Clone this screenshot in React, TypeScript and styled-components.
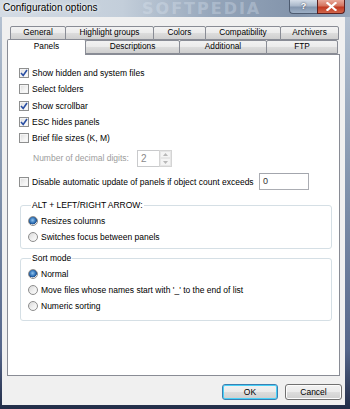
import React from 'react';
import styled, { createGlobalStyle } from 'styled-components';

const GlobalStyle = createGlobalStyle`
  html, body {
    margin: 0;
    padding: 0;
    background: #ffffff;
  }
  body {
    font-family: "Liberation Sans", Arial, sans-serif;
    font-size: 8.5px;
    color: #000;
  }
`;

const topTabs = [
  { label: 'General', width: 56 },
  { label: 'Highlight groups', width: 89 },
  { label: 'Colors', width: 53 },
  { label: 'Compatibility', width: 76 },
  { label: 'Archivers', width: 59 },
];

const bottomTabs = [
  { label: 'Panels', width: 79, active: true },
  { label: 'Descriptions', width: 95 },
  { label: 'Additional', width: 88 },
  { label: 'FTP', width: 72 },
];

const checks = [
  { label: 'Show hidden and system files', checked: true },
  { label: 'Select folders', checked: false },
  { label: 'Show scrollbar', checked: true },
  { label: 'ESC hides panels', checked: true },
  { label: 'Brief file sizes (K, M)', checked: false },
];

const App: React.FC = () => {
  return (
    <>
      <GlobalStyle />
      <Window>
        <TitleBar>
          <TitleText>Configuration options</TitleText>
          <TitleWatermark>SOFTPEDIA</TitleWatermark>
          <CaptionButtons>
            <HelpButton>?</HelpButton>
            <CloseButton>
              <svg width="11" height="9" viewBox="0 0 11 9">
                <path d="M1.5 1 L9.5 8 M9.5 1 L1.5 8" stroke="#fff" strokeWidth="2.2" strokeLinecap="square" />
              </svg>
            </CloseButton>
          </CaptionButtons>
        </TitleBar>

        <Frame>
          <Client>
            <TabStrip>
              <TabRow $indent={3} $height={12}>
                {topTabs.map((t) => (
                  <Tab key={t.label} $width={t.width}>{t.label}</Tab>
                ))}
              </TabRow>
              <TabRow $indent={0} $height={16}>
                {bottomTabs.map((t) => (
                  <Tab key={t.label} $width={t.width} $active={t.active}>{t.label}</Tab>
                ))}
              </TabRow>
            </TabStrip>

            <Panel>
              {checks.map((c) => (
                <CheckRow key={c.label}>
                  <CheckBox checked={c.checked} />
                  <span>{c.label}</span>
                </CheckRow>
              ))}

              <DigitsRow>
                <DisabledLabel>Number of decimal digits:</DisabledLabel>
                <SpinWrap>
                  <SpinInput>2</SpinInput>
                  <SpinButtons>
                    <SpinHalf>
                      <svg width="5" height="3" viewBox="0 0 5 3"><path d="M0 3 L2.5 0 L5 3 Z" fill="#b8b8b8" /></svg>
                    </SpinHalf>
                    <SpinHalf>
                      <svg width="5" height="3" viewBox="0 0 5 3"><path d="M0 0 L2.5 3 L5 0 Z" fill="#b8b8b8" /></svg>
                    </SpinHalf>
                  </SpinButtons>
                </SpinWrap>
              </DigitsRow>

              <CountRow>
                <CheckBox checked={false} />
                <CountLabel>Disable automatic update of panels if object count exceeds</CountLabel>
                <TextBox>0</TextBox>
              </CountRow>

              <GroupBox $top={10} $bottom={3}>
                <Legend>ALT + LEFT/RIGHT ARROW:</Legend>
                <RadioRow>
                  <Radio $selected />
                  <span>Resizes columns</span>
                </RadioRow>
                <RadioRow>
                  <Radio />
                  <span>Switches focus between panels</span>
                </RadioRow>
              </GroupBox>

              <GroupBox $top={4} $bottom={6}>
                <Legend>Sort mode</Legend>
                <RadioRow>
                  <Radio $selected />
                  <span>Normal</span>
                </RadioRow>
                <RadioRow>
                  <Radio />
                  <span>Move files whose names start with '_' to the end of list</span>
                </RadioRow>
                <RadioRow>
                  <Radio />
                  <span>Numeric sorting</span>
                </RadioRow>
              </GroupBox>
            </Panel>

            <ButtonRow>
              <DialogButton $default>OK</DialogButton>
              <DialogButton>Cancel</DialogButton>
            </ButtonRow>
          </Client>
        </Frame>
      </Window>
    </>
  );
};

export default App;

const CheckBox: React.FC<{ checked: boolean }> = ({ checked }) => (
  <CheckBoxBox>
    {checked && (
      <svg width="8" height="8" viewBox="0 0 8 8">
        <path d="M1 4 L3.2 6.5 L7 1" fill="none" stroke="#2a4fa3" strokeWidth="1.6" />
      </svg>
    )}
  </CheckBoxBox>
);

const Window = styled.div`
  width: 350px;
  height: 409px;
  display: flex;
  flex-direction: column;
  overflow: hidden;
  background: #8d9db3;
`;

const TitleBar = styled.div`
  position: relative;
  height: 17px;
  flex: none;
  display: flex;
  align-items: flex-start;
  padding: 0 5px 0 3px;
  background: linear-gradient(to right, #d3dbe4 0%, #c3ceda 35%, #93a4b9 62%, #8394ab 85%, #97a7bb 100%);
`;

const TitleText = styled.div`
  font-size: 10px;
  line-height: 15px;
  color: #000;
  text-shadow: 0 0 5px rgba(255, 255, 255, 0.95), 0 0 2px rgba(255, 255, 255, 0.9);
  white-space: nowrap;
`;

const TitleWatermark = styled.div`
  position: absolute;
  left: 142px;
  top: 0;
  font-family: "DejaVu Sans", sans-serif;
  font-weight: bold;
  font-size: 16px;
  line-height: 17px;
  letter-spacing: 2px;
  color: rgba(230, 238, 248, 0.3);
  pointer-events: none;
`;

const CaptionButtons = styled.div`
  margin-left: auto;
  display: flex;
  position: relative;
  z-index: 1;
`;

const HelpButton = styled.div`
  width: 27px;
  height: 13px;
  border: 1px solid #4d5b70;
  border-top: none;
  border-right: none;
  border-radius: 0 0 0 4px;
  background: linear-gradient(to bottom, #d5dde8 0%, #aab8ca 45%, #8496ae 55%, #9dafc5 100%);
  color: #fff;
  font-weight: bold;
  font-size: 9px;
  line-height: 13px;
  text-align: center;
  text-shadow: 0 0 2px #334;
`;

const CloseButton = styled.div`
  width: 26px;
  height: 13px;
  border: 1px solid #5a1f1f;
  border-top: none;
  border-radius: 0 0 4px 0;
  background: linear-gradient(to bottom, #e9a99a 0%, #d3745f 45%, #c23a22 55%, #d0654a 100%);
  display: flex;
  align-items: center;
  justify-content: center;
`;

const Frame = styled.div`
  flex: 1;
  display: flex;
  padding: 0 5px 4px 2px;
  background: linear-gradient(to bottom, #b4c1d1 0%, #7f91ab 45%, #55668a 85%, #222d48 100%);
`;

const Client = styled.div`
  flex: 1;
  display: flex;
  flex-direction: column;
  background: #f0f0f0;
  padding: 11px 5px 5px 5px;
`;

const TabStrip = styled.div`
  display: flex;
  flex-direction: column;
  height: 26px;
  position: relative;
  z-index: 1;
`;

const TabRow = styled.div<{ $indent: number; $height: number }>`
  display: flex;
  align-items: flex-end;
  padding-left: ${(p) => p.$indent}px;
  height: ${(p) => p.$height}px;
  margin-top: -2px;
  &:first-child {
    margin-top: 0;
  }
`;

const Tab = styled.div<{ $width: number; $active?: boolean }>`
  box-sizing: border-box;
  width: ${(p) => p.$width}px;
  height: ${(p) => (p.$active ? 16 : 14)}px;
  margin-left: -1px;
  &:first-child {
    margin-left: 0;
  }
  border: 1px solid #898c95;
  border-bottom: ${(p) => (p.$active ? 'none' : '1px solid #898c95')};
  border-radius: 2px 2px 0 0;
  background: ${(p) =>
    p.$active
      ? '#ffffff'
      : 'linear-gradient(to bottom, #f2f2f2 0%, #ebebeb 50%, #dddddd 51%, #cfcfcf 100%)'};
  font-size: 8.3px;
  line-height: ${(p) => (p.$active ? 13 : 11)}px;
  text-align: center;
  white-space: nowrap;
  position: relative;
  z-index: ${(p) => (p.$active ? 2 : 0)};
  margin-bottom: ${(p) => (p.$active ? -1 : 0)}px;
`;

const Panel = styled.div`
  box-sizing: border-box;
  height: 322px;
  flex: none;
  background: #ffffff;
  border: 1px solid #898c95;
  padding: 10px 7px 0 11px;
  display: flex;
  flex-direction: column;
`;

const CheckRow = styled.div`
  height: 16.3px;
  display: flex;
  align-items: center;
  gap: 3px;
  white-space: nowrap;
`;

const CheckBoxBox = styled.div`
  box-sizing: border-box;
  width: 10px;
  height: 10px;
  flex: none;
  border: 1px solid #8e8f8f;
  background: linear-gradient(135deg, #dcdcdc 0%, #f4f4f4 60%, #ffffff 100%);
  box-shadow: inset 0 0 0 1px #f4f4f4;
  display: flex;
  align-items: center;
  justify-content: center;
`;

const DigitsRow = styled.div`
  height: 17px;
  margin-top: 3.5px;
  padding-left: 14px;
  display: flex;
  align-items: center;
  gap: 8px;
`;

const DisabledLabel = styled.span`
  color: #9c9c9c;
  white-space: nowrap;
`;

const SpinWrap = styled.div`
  display: flex;
  height: 17px;
`;

const SpinInput = styled.div`
  box-sizing: border-box;
  width: 22px;
  height: 17px;
  border: 1px solid #c9cacc;
  border-right: none;
  color: #8a8a8a;
  font-size: 10px;
  line-height: 15px;
  padding-left: 3px;
`;

const SpinButtons = styled.div`
  display: flex;
  flex-direction: column;
  width: 13px;
  height: 17px;
  border: 1px solid #d4d4d4;
  box-sizing: border-box;
`;

const SpinHalf = styled.div`
  flex: 1;
  display: flex;
  align-items: center;
  justify-content: center;
  background: #f4f4f4;
  border: 1px solid #e6e6e6;
`;

const CountRow = styled.div`
  height: 17px;
  margin-top: 6.5px;
  display: flex;
  align-items: center;
  gap: 3px;
  white-space: nowrap;
`;

const CountLabel = styled.span`
  width: 224px;
`;

const TextBox = styled.div`
  box-sizing: border-box;
  width: 50px;
  height: 17px;
  border: 1px solid #abadb3;
  border-top-color: #a3a6ad;
  font-size: 9px;
  line-height: 15px;
  padding-left: 3px;
  color: #333;
`;

const GroupBox = styled.fieldset<{ $top: number; $bottom: number }>`
  margin: ${(p) => p.$top}px 0 0 1px;
  padding: 3px 0 ${(p) => p.$bottom}px 7px;
  border: 1px solid #d5dfe5;
  border-radius: 3px;
  min-width: 0;
`;

const Legend = styled.legend`
  padding: 0 1px;
  margin-left: 3px;
  line-height: 10px;
  font-size: 8.5px;
  color: #000;
`;

const RadioRow = styled.div`
  height: 16px;
  display: flex;
  align-items: center;
  gap: 3px;
  white-space: nowrap;
`;

const Radio = styled.div<{ $selected?: boolean }>`
  box-sizing: border-box;
  width: 10px;
  height: 10px;
  flex: none;
  border-radius: 50%;
  border: 1px solid #8d8d8d;
  background: ${(p) =>
    p.$selected
      ? 'radial-gradient(circle at 45% 40%, #8ec4ef 0%, #2f6fb4 45%, #1c4e8c 62%, #eaeaea 68%, #f6f6f6 100%)'
      : 'linear-gradient(135deg, #d8d8d8 0%, #f0f0f0 55%, #fbfbfb 100%)'};
`;

const ButtonRow = styled.div`
  display: flex;
  justify-content: flex-end;
  gap: 7px;
  margin-top: 8px;
  margin-right: -2px;
`;

const DialogButton = styled.div<{ $default?: boolean }>`
  box-sizing: border-box;
  width: ${(p) => (p.$default ? 56 : 57)}px;
  height: 16px;
  border: 1px solid ${(p) => (p.$default ? '#3c7fb1' : '#707070')};
  border-radius: 3px;
  background: linear-gradient(to bottom, #f2f2f2 0%, #ebebeb 50%, #dddddd 51%, #cfcfcf 100%);
  box-shadow: ${(p) => (p.$default ? 'inset 0 0 0 1px #48d1f8' : 'inset 0 0 0 1px #fcfcfc')};
  font-size: 8.5px;
  line-height: 14px;
  text-align: center;
`;
